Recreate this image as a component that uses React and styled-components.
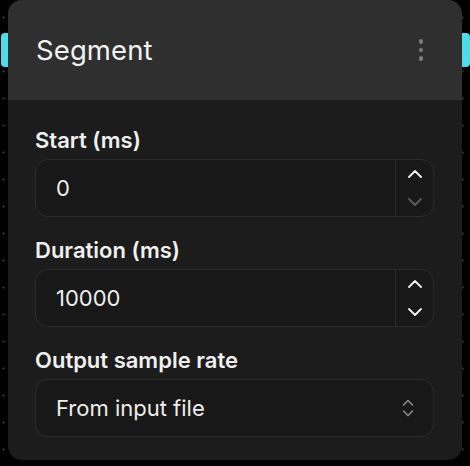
import React, { useState } from "react";
import styled, { createGlobalStyle } from "styled-components";

const GlobalStyle = createGlobalStyle`
  html, body {
    margin: 0;
    padding: 0;
    background-color: #000;
    background-image: radial-gradient(circle, #2a2a2a 1px, transparent 1.4px);
    background-size: 27px 27px;
    background-position: -10px 4px;
    font-family: Inter, "Noto Sans", "Liberation Sans", sans-serif;
    -webkit-font-smoothing: antialiased;
  }
  * {
    box-sizing: border-box;
  }
`;

const Stage = styled.div`
  width: 470px;
  height: 466px;
  padding: 0 8px;
`;

const Node = styled.div`
  position: relative;
  width: 454px;
  height: 460px;
  display: flex;
  flex-direction: column;
  background-color: #1c1c1c;
  border-radius: 14px;
`;

const Handle = styled.div`
  position: absolute;
  top: 33px;
  width: 7px;
  height: 34px;
  background-color: #4fdcea;
  ${(p) =>
    p.side === "left"
      ? "left: -7px; border-radius: 4px 0 0 4px;"
      : "right: -8px; width: 8px; border-radius: 0 4px 4px 0;"}
`;

const Header = styled.div`
  display: flex;
  align-items: center;
  justify-content: space-between;
  height: 100px;
  padding: 0 39px 0 28px;
  background-color: #2f2f2f;
  border-radius: 14px 14px 0 0;
`;

const Title = styled.h1`
  margin: 0;
  font-size: 27.5px;
  font-weight: 400;
  color: #f2f2f2;
  letter-spacing: 0.1px;
`;

const Kebab = styled.button`
  display: flex;
  flex-direction: column;
  gap: 4px;
  padding: 0;
  background: none;
  border: none;
  cursor: pointer;

  span {
    width: 4.5px;
    height: 4.5px;
    border-radius: 50%;
    background-color: #7d7d7d;
  }
`;

const Body = styled.div`
  display: flex;
  flex-direction: column;
  gap: 20px;
  padding: 27px 28px 23px 27px;
`;

const Field = styled.div`
  display: flex;
  flex-direction: column;
  gap: 6px;
`;

const Label = styled.label`
  font-size: 22px;
  line-height: 26px;
  font-weight: 600;
  color: #f0f0f0;
`;

const Box = styled.div`
  display: flex;
  align-items: stretch;
  height: 58px;
  background-color: #181818;
  border: 1.5px solid #2b2b2b;
  border-radius: 13px;
  overflow: hidden;
`;

const Input = styled.input`
  flex: 1;
  min-width: 0;
  padding: 0 20px;
  font-family: inherit;
  font-size: 22px;
  color: #ededed;
  background: transparent;
  border: none;
  outline: none;
`;

const Stepper = styled.div`
  display: flex;
  flex-direction: column;
  width: 38px;
  border-left: 1.5px solid #2b2b2b;
`;

const StepButton = styled.button`
  flex: 1;
  display: flex;
  align-items: center;
  justify-content: center;
  padding: 0;
  background: none;
  border: none;
  color: ${(p) => (p.disabled ? "#5a5a5a" : "#f2f2f2")};
  cursor: ${(p) => (p.disabled ? "default" : "pointer")};
`;

const Select = styled.div`
  display: flex;
  align-items: center;
  justify-content: space-between;
  height: 58px;
  padding: 0 19px 0 20px;
  font-size: 22px;
  color: #ededed;
  background-color: #181818;
  border: 1.5px solid #2b2b2b;
  border-radius: 13px;
  cursor: pointer;
`;

const Chevron = ({ up }) => (
  <svg width="14" height="8" viewBox="0 0 14 8" fill="none">
    <path
      d={up ? "M1 7 L7 1 L13 7" : "M1 1 L7 7 L13 1"}
      stroke="currentColor"
      strokeWidth="1.8"
      strokeLinecap="round"
      strokeLinejoin="round"
    />
  </svg>
);

const UpDown = () => (
  <svg width="12" height="20" viewBox="0 0 12 20" fill="none">
    <path
      d="M1.5 7 L6 2.5 L10.5 7 M1.5 13 L6 17.5 L10.5 13"
      stroke="#8a8a8a"
      strokeWidth="1.6"
      strokeLinecap="round"
      strokeLinejoin="round"
    />
  </svg>
);

function NumberField({ label, value, onChange, min = 0 }) {
  return (
    <Field>
      <Label>{label}</Label>
      <Box>
        <Input
          type="text"
          value={value}
          onChange={(e) => onChange(e.target.value.replace(/\D/g, ""))}
        />
        <Stepper>
          <StepButton onClick={() => onChange(String(Number(value) + 1))}>
            <Chevron up />
          </StepButton>
          <StepButton
            disabled={Number(value) <= min}
            onClick={() => onChange(String(Math.max(min, Number(value) - 1)))}
          >
            <Chevron />
          </StepButton>
        </Stepper>
      </Box>
    </Field>
  );
}

export default function App() {
  const [start, setStart] = useState("0");
  const [duration, setDuration] = useState("10000");

  return (
    <>
      <GlobalStyle />
      <Stage>
        <Node>
          <Handle side="left" />
          <Handle side="right" />
          <Header>
            <Title>Segment</Title>
            <Kebab aria-label="More">
              <span />
              <span />
              <span />
            </Kebab>
          </Header>
          <Body>
            <NumberField label="Start (ms)" value={start} onChange={setStart} />
            <NumberField
              label="Duration (ms)"
              value={duration}
              onChange={setDuration}
            />
            <Field>
              <Label>Output sample rate</Label>
              <Select>
                <span>From input file</span>
                <UpDown />
              </Select>
            </Field>
          </Body>
        </Node>
      </Stage>
    </>
  );
}
